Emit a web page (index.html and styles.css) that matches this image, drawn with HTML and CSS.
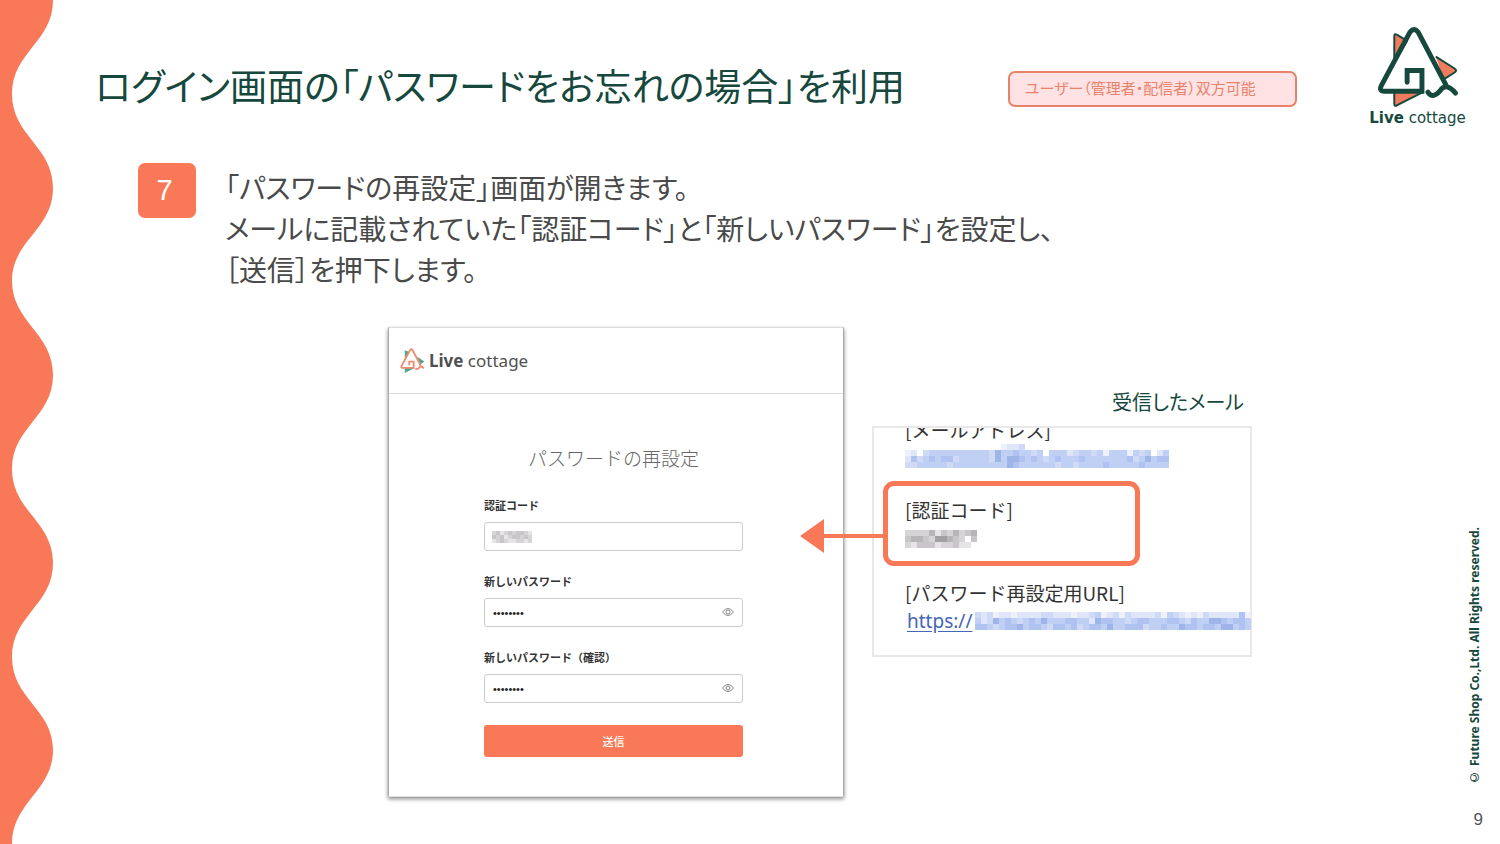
FILE: index.html
```html
<!DOCTYPE html>
<html lang="ja">
<head>
<meta charset="utf-8">
<title>ログイン画面の「パスワードをお忘れの場合」を利用</title>
<link rel="stylesheet" href="styles.css">
</head>
<body>
<div class="slide">
  <svg class="wave" viewBox="0 0 54 844" preserveAspectRatio="none" aria-hidden="true">
    <path d="M0 0H53C53 42 12 52 12 94S53 146 53 188S12 240 12 281S53 333 53 375S12 427 12 469S53 521 53 563S12 615 12 657S53 709 53 750S12 802 12 844H0Z"/>
  </svg>
  <main class="main">
    <header class="header">
      <h1 class="title">ログイン画面の「パスワードをお忘れの場合」を利用</h1>
      <p class="badge">ユーザー（管理者・配信者）双方可能</p>
    </header>
    <section class="step">
      <span class="step-number">7</span>
      <p class="step-text">「パスワードの再設定」画面が開きます。<br>メールに記載されていた「認証コード」と「新しいパスワード」を設定し、<br>［送信］を押下します。</p>
    </section>
    <section class="figures">
      <div class="screen">
        <div class="screen-head">
          <svg class="mini-logo" viewBox="0 0 84 84" aria-hidden="true">
            <path class="mini-leaf" d="M16 32V6L32 12ZM58 28L82 44L68 54ZM16 64V82L48 66Z"/>
            <path class="mini-line" d="M70 58L42 5Q38 0 34 5L5 59Q2 65 8 65H46V44H31V56"/>
            <path class="mini-line" d="M52 66Q57 73 64 65Q70 55 80 67"/>
          </svg>
          <span class="brand"><b>Live</b> cottage</span>
        </div>
        <form class="form">
          <h2 class="form-title">パスワードの再設定</h2>
          <label class="label" for="code">認証コード</label>
          <div class="field">
            <input class="input" id="code" type="text">
            <svg class="mosaic mosaic-field" data-cell="4" data-rows="bcabcbccba,cbcabccbcb,abcbaabbab"></svg>
          </div>
          <label class="label" for="pw">新しいパスワード</label>
          <div class="field">
            <input class="input" id="pw" type="password" value="password">
            <svg class="eye" viewBox="0 0 12 8" aria-hidden="true"><path d="M.5 4Q6-3 11.500 4Q6 11 .5 4Z"/><circle cx="6" cy="4" r="2"/></svg>
          </div>
          <label class="label" for="pw2">新しいパスワード（確認）</label>
          <div class="field">
            <input class="input" id="pw2" type="password" value="password">
            <svg class="eye" viewBox="0 0 12 8" aria-hidden="true"><path d="M.5 4Q6-3 11.500 4Q6 11 .5 4Z"/><circle cx="6" cy="4" r="2"/></svg>
          </div>
          <button class="submit" type="button">送信</button>
        </form>
      </div>
      <div class="mail">
        <h2 class="mail-title">受信したメール</h2>
        <div class="mail-body">
          <div class="mail-first">
            <p class="mail-label mail-label-cut">[メールアドレス]</p>
            <svg class="mosaic" data-cell="6" data-rows="00000000000000001223000000000000000000000000,12034444444444364454434044423443414441434024,25345455344444364665454345444544444445346455,33444443444444444654444443443444454444454444"></svg>
          </div>
          <div class="mail-code">
            <svg class="arrow" viewBox="0 0 86 34" aria-hidden="true"><path d="M0 17L24 0V15H86V19H24V34Z"/></svg>
            <p class="mail-label">[認証コード]</p>
            <svg class="mosaic mosaic-code" data-cell="6" data-rows="bbbbdacbdbcd,cddcbeedcb0c,bacccabbcaa0"></svg>
          </div>
          <div class="mail-last">
            <p class="mail-label">[パスワード再設定用URL]</p>
            <div class="mail-url"><a class="mail-link" href="#">https://</a><svg class="mosaic" data-cell="6" data-rows="3231221222233222122341231322223143212132222251,4236454345464445544265544345544455435446654554,5543455645543554534554644555344544655455466454"></svg></div>
          </div>
        </div>
      </div>
    </section>
  </main>
  <aside class="rail">
    <div class="logo">
      <svg class="logo-mark" viewBox="0 0 84 84" aria-hidden="true">
        <path class="logo-leaf" d="M18 32V9Q18 6 21 8L31 14L18 36M60 30L79 42Q82 44 79 46L68 53M18 66V78Q18 81 21 79L47 66"/>
        <path class="logo-line" d="M70 58L42 5Q38 0 34 5L5 59Q2 65 8 65H46V44H31V56"/>
        <path class="logo-line" d="M52 66Q57 73 64 65Q70 55 80 67"/>
      </svg>
      <span class="logo-text"><b>Live</b> cottage</span>
    </div>
    <footer class="rail-foot">
      <small class="copyright">© Future Shop Co.,Ltd. All Rights reserved.</small>
      <span class="page-number">9</span>
    </footer>
  </aside>
</div>
<script src="mosaic.js"></script>
</body>
</html>
```
FILE: styles.css
```css
* { box-sizing: border-box; }
body { margin: 0; background: #fff; color: #4a4a4a; font-family: "Liberation Sans", "Noto Sans CJK JP", sans-serif; }
h1, h2, p { margin: 0; font-weight: 400; }
.slide { display: flex; min-height: 100vh; }
.wave { flex: none; width: 54px; align-self: stretch; height: auto; fill: #f87857; }
.main { flex: 1; min-width: 0; padding: 61px 0 40px 41px; }
.header { display: flex; align-items: center; justify-content: space-between; padding-right: 63px; }
.title { color: #16483d; font-size: 37px; line-height: 56px; font-feature-settings: "palt"; white-space: nowrap; }
.badge { width: 289px; padding: 0 15px; border: 2px solid #e8826b; border-radius: 7px; background: #ffe2e3; color: #e8826b; font-size: 15px; line-height: 32px; font-feature-settings: "palt"; white-space: nowrap; }
.step { display: flex; gap: 29px; padding: 46px 0 0 43px; }
.step-number { flex: none; width: 58px; height: 55px; padding-right: 5px; border-radius: 7px; background: #f87857; color: #fff; font-size: 29px; line-height: 55px; text-align: center; }
.step-text { padding-top: 6px; font-size: 28px; line-height: 41px; font-feature-settings: "palt"; }

.figures { display: flex; align-items: flex-start; gap: 28px; padding: 35px 0 0 293px; }
.screen { flex: none; width: 456px; padding-bottom: 39px; border: 1px solid #ddd; border-left-color: #aaa; border-right-color: #aaa; background: #fff; box-shadow: 0 2px 4px #888; }
.screen-head { display: flex; align-items: center; gap: 4px; height: 66px; padding-left: 11px; border-bottom: 1px solid #ddd; }
.mini-logo { width: 25px; height: 26px; }
.mini-leaf { fill: #55a493; }
.mini-line { fill: none; stroke: #f08a70; stroke-width: 6; }
.brand { color: #505050; font: 17px "Noto Sans", sans-serif; }
.form { padding: 47px 100px 0 95px; font-family: "Noto Sans CJK JP", sans-serif; }
.form-title { margin-bottom: 22px; color: #666; font-size: 19px; line-height: 34px; font-weight: 300; text-align: center; }
.label { display: block; padding-bottom: 9px; color: #333; font-size: 11px; line-height: 16px; font-weight: 700; }
.field { position: relative; margin-bottom: 22px; }
.input { display: block; width: 100%; height: 29px; padding: 0 8px; border: 1px solid #ccc; border-radius: 3px; background: #fff; color: #222; font-size: 11px; }
.eye { position: absolute; right: 9px; top: 10px; width: 12px; height: 8px; fill: none; stroke: #888; }
.submit { display: block; width: 100%; height: 32px; padding: 0; border: 0; border-radius: 3px; background: #f87857; color: #fff; font: 500 11px "Noto Sans CJK JP", sans-serif; }
.mosaic { display: block; flex: none; }
.mosaic-field { position: absolute; left: 8px; top: 9px; }
.mosaic-code { margin-top: 6px; }

.mail { flex: none; width: 380px; padding-top: 60px; }
.mail-title { padding-right: 8px; color: #16483d; font-size: 20px; line-height: 32px; font-feature-settings: "palt"; text-align: right; }
.mail-body { margin-top: 7px; padding: 0 0 20px 31px; border: 2px solid #e8e8e8; color: #333; font-family: "Noto Sans CJK JP", sans-serif; }
.mail-first { overflow: hidden; }
.mail-label { font-size: 19px; line-height: 28px; }
.mail-label-cut { margin-top: -12px; }
.mail-code { position: relative; width: 257px; margin: 13px 0 13px -22px; padding: 10px 17px 13px; border: 5px solid #f87857; border-radius: 11px; }
.arrow { position: absolute; left: -88px; top: 33px; width: 86px; height: 34px; fill: #f87857; }
.mail-url { display: flex; align-items: center; height: 28px; }
.mail-link { flex: none; width: 70px; padding-left: 2px; color: #4565b5; font: 19px "Noto Sans", sans-serif; text-underline-offset: 3px; }

.rail { flex: none; display: flex; flex-direction: column; justify-content: space-between; width: 140px; padding: 27px 15px 14px 0; }
.logo { display: flex; flex-direction: column; align-items: center; padding-right: 10px; }
.logo-mark { width: 84px; height: 83px; }
.logo-leaf { fill: #ef7c5c; stroke: #16483d; stroke-width: 2; stroke-linejoin: round; }
.logo-line { fill: none; stroke: #16483d; stroke-width: 5; stroke-linecap: round; stroke-linejoin: miter; }
.logo-text { color: #16483d; font: 15px/16px "DejaVu Sans", sans-serif; white-space: nowrap; }
.rail-foot { display: flex; flex-direction: column; align-items: flex-end; gap: 24px; }
.copyright { margin-right: 2px; writing-mode: vertical-rl; transform: rotate(180deg); color: #16483d; font: bold 12px/16px "Noto Sans", sans-serif; white-space: nowrap; }
.page-number { padding-right: 2px; color: #555; font-size: 17px; line-height: 20px; }
```
FILE: mosaic.js
```js
const palette = {
  1: '#eef1fc', 2: '#dfe6fa', 3: '#cfdaf7', 4: '#c0cff4', 5: '#b0c3f0', 6: '#9fb5e8', 7: '#8faae2', 8: '#7f9cd9',
  a: '#e6e4e6', b: '#d6d4d6', c: '#c8c6c8', d: '#b8b5b8', e: '#a29fa3'
};

document.querySelectorAll('.mosaic').forEach((svg) => {
  const size = Number(svg.dataset.cell);
  const rows = svg.dataset.rows.split(',');
  svg.setAttribute('width', rows[0].length * size);
  svg.setAttribute('height', rows.length * size);
  rows.forEach((row, y) => {
    [...row].forEach((key, x) => {
      if (!palette[key]) return;
      const rect = document.createElementNS('http://www.w3.org/2000/svg', 'rect');
      rect.setAttribute('x', x * size);
      rect.setAttribute('y', y * size);
      rect.setAttribute('width', size);
      rect.setAttribute('height', size);
      rect.setAttribute('fill', palette[key]);
      svg.appendChild(rect);
    });
  });
});
```
